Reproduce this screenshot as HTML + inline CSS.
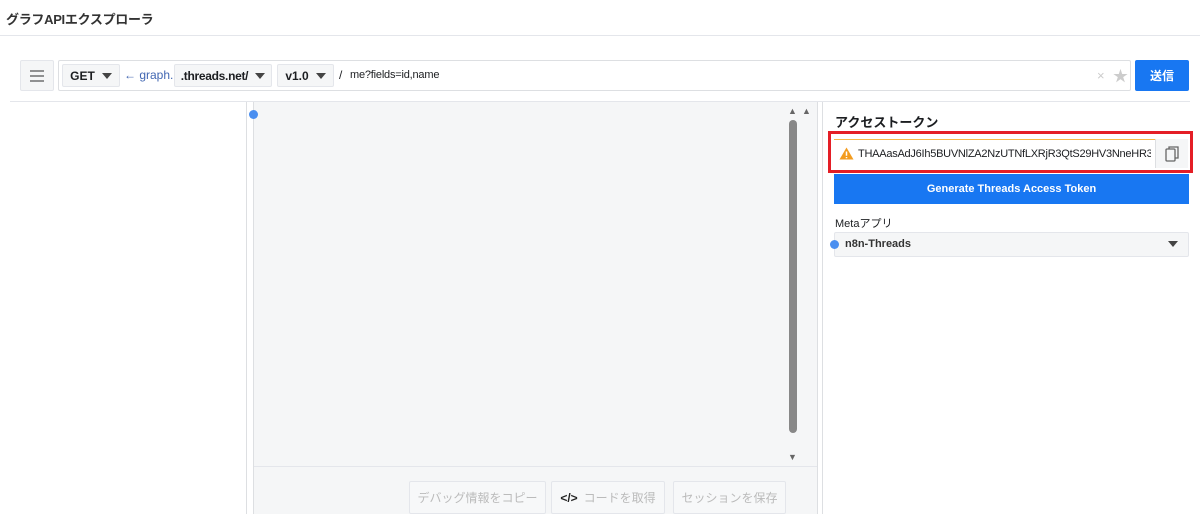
<!DOCTYPE html>
<html><head><meta charset="utf-8"><style>
*{box-sizing:border-box;margin:0;padding:0}
body{width:1200px;height:514px;background:#fff;font-family:"Liberation Sans","Noto Sans CJK JP",sans-serif;position:relative;overflow:hidden;color:#1c1e21}
.a{position:absolute}
.btn{position:absolute;background:#f5f6f7;border:1px solid #e4e6eb;border-radius:2px;font-size:12px;font-weight:bold;display:flex;align-items:center;justify-content:center;color:#1c1e21}
.tri{display:inline-block;width:0;height:0;border-left:5px solid transparent;border-right:5px solid transparent;border-top:6px solid #444;margin-left:7px}
</style></head><body>
<div class="a" style="left:6px;top:9px;font-size:13px;font-weight:bold;color:#333;letter-spacing:-0.3px">グラフAPIエクスプローラ</div>
<div class="a" style="left:0;top:35px;width:1200px;height:1px;background:#e4e6eb"></div>
<div class="btn" style="left:20px;top:60px;width:34px;height:31px"><svg width="14" height="12" viewBox="0 0 14 12"><path d="M0 1h14M0 6h14M0 11h14" stroke="#555" stroke-width="1.3"/></svg></div>
<div class="a" style="left:58px;top:60px;width:1073px;height:31px;border:1px solid #dddfe2;border-radius:2px"></div>
<div class="btn" style="left:62px;top:64px;width:58px;height:23px">GET<span class="tri"></span></div>
<div class="a" style="left:124px;top:68px;font-size:12px;color:#4267b2">← graph.</div>
<div class="btn" style="left:174px;top:64px;width:98px;height:23px;letter-spacing:-0.3px">.threads.net/<span class="tri"></span></div>
<div class="btn" style="left:277px;top:64px;width:57px;height:23px">v1.0<span class="tri"></span></div>
<div class="a" style="left:339px;top:68px;font-size:12px">/</div>
<div class="a" style="left:350px;top:69px;font-size:11px;letter-spacing:-0.2px">me?fields=id,name</div>
<div class="a" style="left:1097px;top:68px;font-size:13px;color:#ccc">×</div>
<div class="a" style="left:1113px;top:65px;font-size:15px;color:#ccc">★</div>
<div class="a" style="left:1135px;top:60px;width:54px;height:31px;background:#1877f2;border-radius:2px;color:#fff;font-size:12px;font-weight:bold;display:flex;align-items:center;justify-content:center">送信</div>
<div class="a" style="left:10px;top:101px;width:1180px;height:1px;background:#e4e6eb"></div>
<div class="a" style="left:246px;top:102px;width:1px;height:412px;background:#dddfe2"></div>
<div class="a" style="left:253px;top:102px;width:565px;height:412px;background:#f5f6f7;border-left:1px solid #dddfe2;border-right:1px solid #dddfe2"></div>
<div class="a" style="left:249px;top:110px;width:9px;height:9px;border-radius:50%;background:#4a8ff0"></div>
<div class="a" style="left:789px;top:120px;width:8px;height:313px;background:#888;border-radius:4px"></div>
<div class="a" style="left:788px;top:106px;font-size:9px;color:#666">▲</div>
<div class="a" style="left:802px;top:106px;font-size:9px;color:#666">▲</div>
<div class="a" style="left:788px;top:452px;font-size:9px;color:#666">▼</div>
<div class="a" style="left:254px;top:466px;width:563px;height:1px;background:#e4e6eb"></div>
<div class="btn" style="left:409px;top:481px;width:137px;height:33px;color:#bbb;font-weight:normal;background:#f7f8f9">デバッグ情報をコピー</div>
<div class="btn" style="left:551px;top:481px;width:114px;height:33px;color:#bbb;font-weight:normal;background:#f7f8f9"><b style="color:#222;margin-right:6px">&lt;/&gt;</b>コードを取得</div>
<div class="btn" style="left:673px;top:481px;width:113px;height:33px;color:#bbb;font-weight:normal;background:#f7f8f9">セッションを保存</div>
<div class="a" style="left:822px;top:102px;width:1px;height:412px;background:#dddfe2"></div>
<div class="a" style="left:835px;top:112px;font-size:13px;font-weight:bold">アクセストークン</div>
<div class="a" style="left:828px;top:131px;width:365px;height:42px;border:3px solid #e41e26"></div>
<div class="a" style="left:834px;top:139px;width:321px;height:29px;border-top:1px solid #f5b849;background:#fff"></div>
<svg class="a" style="left:839px;top:147px" width="15" height="13" viewBox="0 0 15 13"><path d="M7.5 0.5L14.5 12.5H0.5Z" fill="#f39c1f"/><path d="M7.5 4.5v4.2M7.5 10v1.3" stroke="#fff" stroke-width="1.5"/></svg>
<div class="a" style="left:858px;top:148px;width:293px;overflow:hidden;white-space:nowrap;font-size:11px;letter-spacing:-0.25px">THAAasAdJ6Ih5BUVNlZA2NzUTNfLXRjR3QtS29HV3NneHR3U</div>
<div class="a" style="left:1155px;top:139px;width:33px;height:29px;background:#f5f6f7;border-left:1px solid #dddfe2;display:flex;align-items:center;justify-content:center"><svg width="14" height="16" viewBox="0 0 14 16"><rect x="1" y="3" width="9" height="12" rx="1" fill="none" stroke="#666" stroke-width="1.3"/><path d="M4 3V1h9v11h-3" fill="none" stroke="#666" stroke-width="1.3"/></svg></div>
<div class="a" style="left:834px;top:174px;width:355px;height:30px;background:#1877f2;color:#fff;font-size:11px;font-weight:bold;display:flex;align-items:center;justify-content:center">Generate Threads Access Token</div>
<div class="a" style="left:835px;top:215px;font-size:11px">Metaアプリ</div>
<div class="a" style="left:834px;top:232px;width:355px;height:25px;background:#f5f6f7;border:1px solid #e4e6eb;border-radius:2px"></div>
<div class="a" style="left:830px;top:240px;width:9px;height:9px;border-radius:50%;background:#4a8ff0"></div>
<div class="a" style="left:845px;top:238px;font-size:11px;font-weight:bold;color:#333">n8n-Threads</div>
<div class="a" style="left:1168px;top:241px;width:0;height:0;border-left:5px solid transparent;border-right:5px solid transparent;border-top:6px solid #444"></div>
</body></html>
